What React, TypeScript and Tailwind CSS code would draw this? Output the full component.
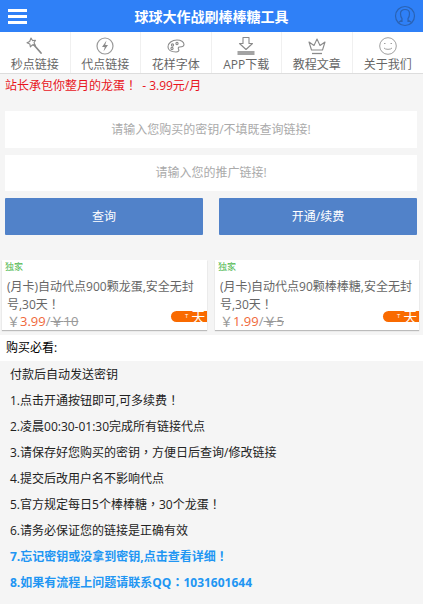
import React from "react";

const font = { fontFamily: '"Open Sans","Noto Sans CJK SC",sans-serif' };

const P = ({ t }: { t: string }) => (
  <>
    {t.split(/([！，：])/).map((s, i) =>
      /[！，：]/.test(s) ? (
        <span key={i} className="font-['Noto_Sans_CJK_TC'] leading-[0]">{s}</span>
      ) : (
        <React.Fragment key={i}>{s}</React.Fragment>
      )
    )}
  </>
);

const Wand = () => (
  <svg width="22" height="20" viewBox="0 0 22 20" fill="none" stroke="#8a8a8a" strokeWidth="1.1">
    <path d="M7 2l1.5 2.6 3-.4-1.5 2.6 1.4 2.6-3-.5-2 2-.6-3L3 6.800l2.700-1.300z" strokeLinejoin="round" />
    <path d="M10 9l7 8" strokeWidth="1.800" strokeLinecap="round" />
  </svg>
);
const Bolt = () => (
  <svg width="20" height="20" viewBox="0 0 20 20" fill="none">
    <circle cx="10" cy="10" r="8" stroke="#999" strokeWidth="1.200" />
    <path d="M11.500 4.500L7 11h2.800l-1.300 4.500L13 9h-2.800z" fill="#8a8a8a" />
  </svg>
);
const Palette = () => (
  <svg width="22" height="20" viewBox="0 0 22 20" fill="none" stroke="#8a8a8a" strokeWidth="1.100">
    <path d="M3 11c0-4 4-7 9-7 4 0 7 2 7 4.500 0 2-2.500 2.500-4.500 2.500-1.500 0-1.500 1.500-.8 2.500.6 1-.2 2.500-2.700 2.500C6 16 3 14 3 11z" />
    <circle cx="7.500" cy="9" r="1.100" />
    <circle cx="12" cy="7.500" r="1.100" />
    <circle cx="7" cy="12.500" r="1.100" />
  </svg>
);
const Download = () => (
  <svg width="20" height="20" viewBox="0 0 20 20" fill="none">
    <path d="M7 1.500h6v6h3.500L10 13.500 3.500 7.500H7z" stroke="#8a8a8a" strokeWidth="1.100" strokeLinejoin="round" />
    <path d="M1.500 15h17v4h-17z" fill="#a3a3a3" />
  </svg>
);
const Crown = () => (
  <svg width="20" height="20" viewBox="0 0 20 20" fill="none" stroke="#8a8a8a" strokeWidth="1.100" strokeLinejoin="round">
    <path d="M4.500 14L2 6l5 3.500L10 3l3 6.500L18 6l-2.500 8z" />
    <path d="M5 17.500h10" strokeWidth="1.300" />
  </svg>
);
const Smile = () => (
  <svg width="20" height="20" viewBox="0 0 20 20" fill="none" stroke="#a0a0a0" strokeWidth="1">
    <circle cx="10" cy="10" r="8.300" />
    <path d="M6 7.500h1.500M12.500 7.500H14" />
    <path d="M6 12c1.200 1.800 6.800 1.800 8 0" />
  </svg>
);

const nav: [React.ReactNode, string][] = [
  [<Wand />, "秒点链接"],
  [<Bolt />, "代点链接"],
  [<Palette />, "花样字体"],
  [<Download />, "APP下载"],
  [<Crown />, "教程文章"],
  [<Smile />, "关于我们"],
];

const Card = ({ title, price, old, cls }: { title: string; price: string; old: string; cls: string }) => (
  <div className={`relative h-[70px] overflow-hidden bg-white shadow-[0_1px_1px_#bbb] ${cls}`}>
    <div className="pl-[3px] pt-[1px] text-[9px] leading-[12px] text-[#4fb84f]">独家</div>
    <div className="px-[5px] pt-[5px] text-[12px] leading-[18px] text-[#666]"><P t={title} /></div>
    <div className="px-[5px] text-[13px] leading-[14px] text-[#999]">
      ￥<span className="text-[#f0683a]">{price}</span>/<span className="line-through">￥{old}</span>
    </div>
    <div className="absolute right-0 top-[51px] flex h-[11px] w-[36px] items-center rounded-l-full bg-[#f96a00] pl-[14px] text-[14px] leading-[11px] text-white">
      <span className="text-[6px] mr-[3px]">T</span>天
    </div>
  </div>
);

const lines = [
  "付款后自动发送密钥",
  "1.点击开通按钮即可,可多续费！",
  "2.凌晨00:30-01:30完成所有链接代点",
  "3.请保存好您购买的密钥，方便日后查询/修改链接",
  "4.提交后改用户名不影响代点",
  "5.官方规定每日5个棒棒糖，30个龙蛋！",
  "6.请务必保证您的链接是正确有效",
];

export default function App() {
  return (
    <div style={font} className="h-[604px] w-[423px] overflow-hidden bg-[#f5f5f5]">
      <header className="flex h-[32px] items-center justify-between bg-[#2f80f7] pl-[8px] pr-[7px]">
        <div className="flex w-[19px] flex-col gap-[3px]">
          <span className="h-[3px] bg-white" />
          <span className="h-[3px] bg-white" />
          <span className="h-[3px] bg-white" />
        </div>
        <h1 className="ml-[2px] text-[14px] font-bold text-white">球球大作战刷棒棒糖工具</h1>
        <svg width="22" height="22" viewBox="0 0 22 22" fill="none" stroke="#2a62b4" strokeWidth="1.200">
          <circle cx="11" cy="11" r="9.500" />
          <path d="M8 17v-3.500c-1-1-1.500-2.500-1.500-5C6.500 6 8.500 4.500 11 4.500s4.500 1.500 4.500 4c0 2.500-.5 4-1.500 5V17M4.500 17.500L8 15M17.500 17.500L14 15" />
        </svg>
      </header>

      <nav className="grid h-[42px] grid-cols-6 border-b border-[#ddd] bg-white">
        {nav.map(([icon, label], i) => (
          <div key={label} className={`flex flex-col items-center pt-[4px] ${i < 5 ? "border-r border-[#f0f0f0]" : ""}`}>
            <div className="flex h-[20px] items-center">{icon}</div>
            <div className="text-[12px] leading-[17px] text-[#666]">{label}</div>
          </div>
        ))}
      </nav>

      <p className="h-[37px] pl-[5px] pt-[3px] text-[12px] leading-[17px] text-[#e8141c]">
        <P t="站长承包你整月的龙蛋！" /><span className="ml-[2px]"> - 3.99元/月</span>
      </p>

      <div className="flex flex-col gap-[7px] pl-[5px] pr-[6px]">
        <div className="flex h-[37px] items-center justify-center bg-white text-[12px] text-[#aaa]">请输入您购买的密钥/不填既查询链接!</div>
        <div className="flex h-[36px] items-center justify-center bg-white text-[12px] text-[#aaa]">请输入您的推广链接!</div>
        <div className="grid grid-cols-2 gap-[16px]">
          <button className="h-[37px] rounded-[1px] bg-[#5182c9] text-[12px] text-white">查询</button>
          <button className="h-[37px] rounded-[1px] bg-[#5182c9] text-[12px] text-white">开通/续费</button>
        </div>
      </div>

      <div className="mt-[25px] flex gap-[8px] pl-[2px] pr-[4px]">
        <Card cls="w-[205px]" title="(月卡)自动代点900颗龙蛋,安全无封号,30天！" price="3.99" old="10" />
        <Card cls="w-[204px]" title="(月卡)自动代点90颗棒棒糖,安全无封号,30天！" price="1.99" old="5" />
      </div>

      <div className="mt-[5px] h-[26px] bg-white pl-[6px] text-[12px] leading-[26px] text-black">购买必看:</div>

      <div className="pl-[10px] pt-[1px] text-[12px] leading-[26px] text-[#222]">
        {lines.map((l) => (
          <div key={l}><P t={l} /></div>
        ))}
        <div className="font-bold text-[#2196f3]"><P t="7.忘记密钥或没拿到密钥,点击查看详细！" /></div>
        <div className="font-bold text-[#2196f3]"><P t="8.如果有流程上问题请联系QQ：1031601644" /></div>
      </div>
    </div>
  );
}
